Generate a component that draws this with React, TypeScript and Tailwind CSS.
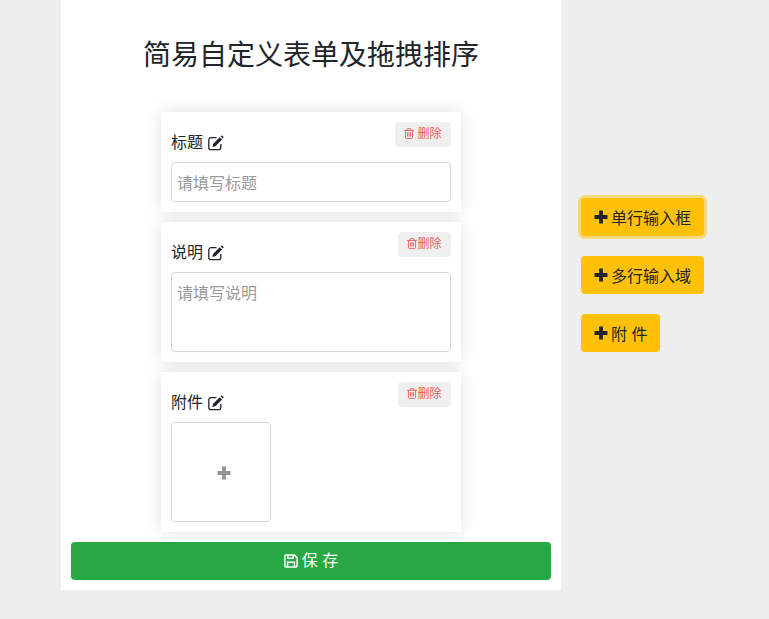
const font = { fontFamily: '"Liberation Sans", "Noto Sans CJK SC", sans-serif' };

function EditIcon() {
  return (
    <svg viewBox="0 0 16 16" className="h-[16px] w-[16px] shrink-0" fill="none">
      <path d="M8.5 2.7H3A2.2 2.2 0 0 0 .8 4.9v7.6A2.2 2.2 0 0 0 3 14.7h7.6a2.2 2.2 0 0 0 2.2-2.2V9" stroke="currentColor" strokeWidth="1.3" />
      <path d="M5 8.9 11.7 2.2l2.4 2.4-6.7 6.7-3 .6zM12.6 1.3l.7-.6c.3-.3.7-.3 1 0l1.1 1.1c.3.3.3.7 0 1l-.7.7z" fill="currentColor" />
    </svg>
  );
}

function TrashIcon() {
  return (
    <svg viewBox="0 0 11 12" className="h-[11px] w-[10px] shrink-0" fill="none" stroke="currentColor" strokeWidth="1">
      <path d="M0 2.6h11M3.5 2.6V1.2c0-.3.2-.6.6-.6h2.8c.4 0 .6.3.6.6v1.4M1.6 2.6v7.8c0 .6.4 1 1 1h5.8c.6 0 1-.4 1-1V2.6M3.9 4.6v4.8M5.5 4.6v4.8M7.1 4.6v4.8" />
    </svg>
  );
}

function PlusIcon({ className }: { className: string }) {
  return (
    <svg viewBox="0 0 14 14" className={className} fill="currentColor">
      <path d="M5.6.5h2.8a.5.5 0 0 1 .5.5v4.1H13a.5.5 0 0 1 .5.5v2.8a.5.5 0 0 1-.5.5H8.9V13a.5.5 0 0 1-.5.5H5.6a.5.5 0 0 1-.5-.5V8.9H1a.5.5 0 0 1-.5-.5V5.6a.5.5 0 0 1 .5-.5h4.1V1a.5.5 0 0 1 .5-.5z" />
    </svg>
  );
}

function SaveIcon() {
  return (
    <svg viewBox="0 0 14 14" className="h-[14px] w-[14px] shrink-0" fill="none" stroke="currentColor" strokeWidth="1.5">
      <path d="M1.9.9h8.4l2.8 2.8v8.4a1 1 0 0 1-1 1H1.9a1 1 0 0 1-1-1V1.9a1 1 0 0 1 1-1z" />
      <path d="M3.6 13V8.2h6.8V13M3.8 1v3.2h5.4V1" />
    </svg>
  );
}

function DeleteButton({ wide }: { wide?: boolean }) {
  return (
    <button
      className={`absolute top-[10px] right-[10px] flex h-[25px] items-center justify-center rounded bg-[#efefef] pb-[2px] text-xs text-[#f05a5a] ${wide ? "w-[56px] gap-[3px]" : "w-[53px]"}`}
    >
      <TrashIcon />
      删除
    </button>
  );
}

function CardLabel({ label }: { label: string }) {
  return (
    <label className="mb-[8px] flex h-[24px] items-center gap-[5px] pt-[1px] text-base text-[#212529]">
      {label}
      <EditIcon />
    </label>
  );
}

function SideButton({ label, focused }: { label: string; focused?: boolean }) {
  return (
    <button
      className={`flex h-[38px] w-fit items-center gap-[3px] rounded bg-[#ffc107] px-[13px] text-base text-[#212529] ${focused ? "shadow-[0_0_0_3px_rgba(255,193,7,0.5)]" : ""}`}
    >
      <PlusIcon className="h-[14px] w-[14px] shrink-0" />
      <span className="pt-[3px]">{label}</span>
    </button>
  );
}

export default function App() {
  return (
    <div className="flex h-[619px] overflow-hidden bg-[#eeeeee]" style={font}>
      {/* Form panel */}
      <div className="ml-[61px] flex h-[590px] w-[500px] flex-col items-center bg-white">
        <h1 className="mt-[35px] mb-[35px] h-[42px] text-center text-[28px] leading-[42px] font-normal text-[#212529]">
          简易自定义表单及拖拽排序
        </h1>

        <div className="flex w-[300px] flex-col gap-[10px]">
          <div className="relative h-[100px] bg-white px-[10px] pt-[18px] shadow-[0_0_15px_rgba(0,0,0,0.12)]">
            <DeleteButton wide />
            <CardLabel label="标题" />
            <input
              readOnly
              placeholder="请填写标题"
              className="block h-[40px] w-[280px] rounded border border-[#d4d8dc] bg-white px-[5px] pt-[3px] text-base placeholder:text-[#9a9a9a]"
            />
          </div>

          <div className="relative h-[140px] bg-white px-[10px] pt-[18px] shadow-[0_0_15px_rgba(0,0,0,0.12)]">
            <DeleteButton />
            <CardLabel label="说明" />
            <textarea
              readOnly
              placeholder="请填写说明"
              className="block h-[80px] w-[280px] resize-none rounded border border-[#d4d8dc] bg-white px-[5px] pt-[9px] text-base placeholder:text-[#9a9a9a]"
            />
          </div>

          <div className="relative h-[160px] bg-white px-[10px] pt-[18px] shadow-[0_0_15px_rgba(0,0,0,0.12)]">
            <DeleteButton />
            <CardLabel label="附件" />
            <div className="flex h-[100px] w-[100px] items-center justify-center rounded border border-[#d4d8dc] pt-[2px] pl-[5px]">
              <PlusIcon className="h-[14px] w-[14px] text-[#8f9299]" />
            </div>
          </div>
        </div>

        <button className="mt-[10px] flex h-[38px] w-[480px] items-center justify-center gap-[4px] rounded bg-[#28a745] text-base text-white">
          <SaveIcon />
          保 存
        </button>
      </div>

      {/* Field buttons */}
      <div className="mt-[198px] ml-[20px] flex flex-col gap-[20px]">
        <SideButton label="单行输入框" focused />
        <SideButton label="多行输入域" />
        <SideButton label="附 件" />
      </div>
    </div>
  );
}
